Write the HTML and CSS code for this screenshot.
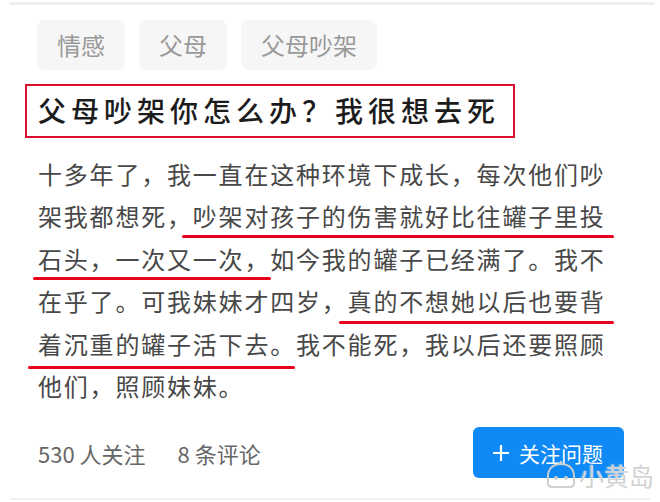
FILE: index.html
```html
<!DOCTYPE html>
<html lang="zh">
<head>
	<meta charset="UTF-8">
	<title>父母吵架你怎么办</title>
	<link rel="stylesheet" href="styles.css">
</head>
<body>
	<div class='page'>
		<div class='rule-top'></div>
		<div class='tags'>
			<span class='tag'>情感</span>
			<span class='tag'>父母</span>
			<span class='tag'>父母吵架</span>
		</div>
		<h1 class='title'>父母吵架你怎么办？我很想去死</h1>
		<div class='text'>
			<p>十多年了，我一直在这种环境下成长，每次他们吵</p>
			<p>架我都想死，吵架对孩子的伤害就好比往罐子里投</p>
			<p>石头，一次又一次，如今我的罐子已经满了。我不</p>
			<p>在乎了。可我妹妹才四岁，真的不想她以后也要背</p>
			<p>着沉重的罐子活下去。我不能死，我以后还要照顾</p>
			<p>他们，照顾妹妹。</p>
			<i class='mark m1'></i>
			<i class='mark m2'></i>
			<i class='mark m3'></i>
			<i class='mark m4'></i>
		</div>
		<div class='foot'>
			<div class='meta'>
				<span>530 人关注</span>
				<span>8 条评论</span>
			</div>
			<div class='follow'>
				<svg width="18" height="18" viewBox="0 0 18 18"><path d="M9 1v16M1 9h16" stroke="#fff" stroke-width="2.2" fill="none"/></svg>
				<span>关注问题</span>
			</div>
		</div>
		<div class='rule-bottom'></div>
		<div class='watermark'>
			<svg width="32" height="30" viewBox="0 0 32 30"><path d="M16 4C8 4 3 9 3 16v7c0 3 2 4 4 4h18c2 0 4-1 4-4v-7C29 9 24 4 16 4z" fill="none" stroke="#cfcfcf" stroke-width="2"/><path d="M16 4v-3" stroke="#cfcfcf" stroke-width="2"/><circle cx="11" cy="18" r="2" fill="#cfcfcf"/><circle cx="21" cy="18" r="2" fill="#cfcfcf"/></svg>
			<span>小黄岛</span>
		</div>
	</div>
</body>
</html>
```

FILE: styles.css
```css
*{
	margin: 0;
	padding: 0;
}
body{
	background: #fff;
	font-family: "Noto Sans CJK SC", "Noto Sans", sans-serif;
}
.page{
	width: 660px;
	height: 502px;
	position: relative;
	overflow: hidden;
}
.rule-top{
	height: 3px;
	margin: 2px 5px 0 9px;
	background: #efefef;
}
.tags{
	display: flex;
	gap: 14px;
	margin: 15px 0 0 37px;
}
.tag{
	height: 50px;
	line-height: 50px;
	padding: 0 20px;
	background: #f6f6f6;
	border-radius: 8px;
	font-size: 24px;
	color: #999;
}
.title{
	box-sizing: border-box;
	width: 490px;
	height: 54px;
	margin: 14px 0 0 25px;
	padding-left: 11px;
	border: 2px solid #d8102c;
	font-size: 28px;
	font-weight: 500;
	line-height: 48px;
	letter-spacing: 5px;
	color: #1c1c1c;
	white-space: nowrap;
}
.text{
	position: relative;
	margin: 15px 0 0 38px;
	font-size: 24px;
	line-height: 42.4px;
	letter-spacing: 1.8px;
	color: #484848;
	white-space: nowrap;
}
.mark{
	position: absolute;
	height: 3px;
	background: #e8001c;
	border-radius: 2px;
}
.m1{
	left: 144px;
	top: 82px;
	width: 432px;
}
.m2{
	left: -5px;
	top: 124px;
	width: 238px;
}
.m3{
	left: 301px;
	top: 168px;
	width: 275px;
}
.m4{
	left: -10px;
	top: 213px;
	width: 267px;
}
.foot{
	display: flex;
	justify-content: space-between;
	align-items: center;
	margin: 20px 36px 0 38px;
}
.meta{
	display: flex;
	gap: 32px;
	font-size: 22px;
	color: #666;
}
.follow{
	display: flex;
	align-items: center;
	gap: 9px;
	box-sizing: border-box;
	width: 151px;
	height: 51px;
	padding-left: 19px;
	background: #0f89f5;
	border-radius: 6px;
	font-size: 21px;
	color: #fff;
}
.rule-bottom{
	height: 2px;
	margin: 20px 10px 0 10px;
	background: #f2f2f2;
}
.watermark{
	position: absolute;
	left: 545px;
	top: 459px;
	display: flex;
	align-items: center;
	gap: 2px;
	font-size: 25px;
	line-height: 32px;
	white-space: nowrap;
	color: #d2d2d2;
	text-shadow: 0 0 2px #fff;
}
```
